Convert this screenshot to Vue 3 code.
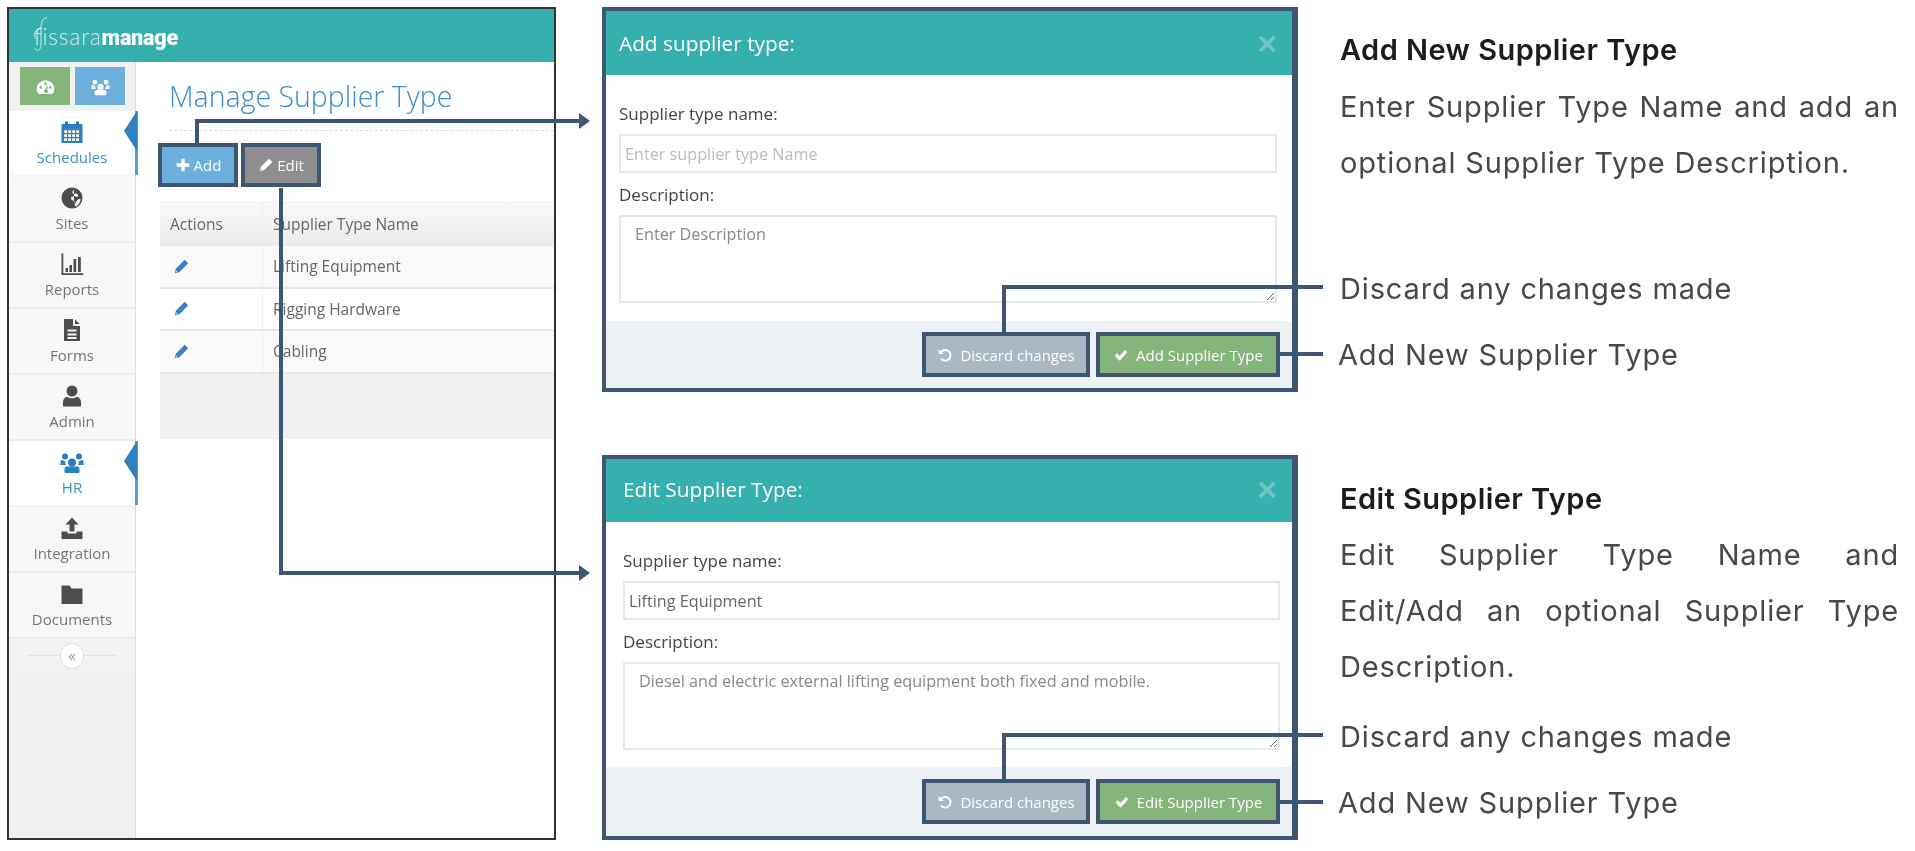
<script setup>
const gridHoles = (() => {
  let s = ''
  for (let r = 0; r < 3; r++) for (let c = 0; c < 4; c++) {
    const x = 4.2 + c * 4, y = 10.2 + r * 4
    s += `M${x} ${y}h2.8v2.8h-2.8z`
  }
  return s
})()

const icons = {
  gauge: 'M12 4a11 11 0 0 0-11 11c0 2.6.9 4.8 2.4 6.5h17.2A10.9 10.9 0 0 0 23 15 11 11 0 0 0 12 4zM6 11.5a1.7 1.7 0 1 1 0 3.4 1.7 1.7 0 0 1 0-3.4zM12 7a1.7 1.7 0 1 1 0 3.4A1.7 1.7 0 0 1 12 7zm6 4.5a1.7 1.7 0 1 1 0 3.4 1.7 1.7 0 0 1 0-3.4zM13.5 11l1.6.7-1.3 4.2a2.4 2.4 0 1 1-1.8-.3z',
  users: 'M12 8.5a4 4 0 1 1 0 8 4 4 0 0 1 0-8zM5 3.5a3 3 0 1 1 0 6 3 3 0 0 1 0-6zm14 0a3 3 0 1 1 0 6 3 3 0 0 1 0-6zM.5 11.5c0-1 1.2-1.5 2-1.5 1 .8 1.7 1 2.7 1-.3 1.8.2 3 1 4H.5zm23 0c0-1-1.2-1.5-2-1.5-1 .8-1.7 1-2.7 1 .3 1.8-.2 3-1 4h5.7zM7 16.5h10c1.5 0 2.5 1 2.5 2.5v2.5c0 1-.8 1.5-1.5 1.5H6c-.7 0-1.5-.5-1.5-1.5V19c0-1.5 1-2.5 2.5-2.5z',
  calendar: 'M1.5 4H5V1.5h3V4h8V1.5h3V4h3.5v19h-21z' + gridHoles,
  globe: 'M12 1.5a10.5 10.5 0 1 0 0 21 10.5 10.5 0 0 0 0-21zM20.5 13c0 3.5-2 6-4.5 7.5l-1.5-1 1-3 3-3.5zM14 4l-2 2 1.5 2 3-.5 2 2-1.5 1.5-3-1-3 1 .5 3 3 1-.5 3.5z',
  chart: 'M1.5 1.5h1.8v19.7h20v1.8H1.5zM5.5 16H8v4H5.5zM9.5 13H12v7H9.5zM13.5 7h2.7v13h-2.7zM18 5h2.8v15H18z',
  file: 'M4 1h9v7h7v15H4zM15 1.3 19.7 6H15zM7.5 11.5v2h9v-2zM7.5 15.5v2h9v-2zM7.5 19v2h9v-2z',
  user: 'M12 1.5a5.5 5.5 0 1 1 0 11 5.5 5.5 0 0 1 0-11zM3 22.5V18c0-3 2-5 4.5-5.3 1.2 1 2.8 1.6 4.5 1.6s3.3-.6 4.5-1.6C19 13 21 15 21 18v4.5z',
  upload: 'M12 1.5l6.5 7h-4v7h-5v-7h-4zM1.5 15.5h6v2h9v-2h6V23h-21z',
  folder: 'M1.5 3.5h8l2 3h11V22h-21z'
}
const pencil = 'M16.5 2.5l5 5L9 20l-6.5 1.5L4 15zM3.8 20.2l2.5-.6-1.900-1.900z'
const plus = 'M9.5 2.5h5v7h7v5h-7v7h-5v-7h-7v-5h7z'
const check = 'M2.5 13L6 9.5l4 4 8-9L21.5 8 10 20.5z'

const navItems = [
  { label: 'Schedules', icon: 'calendar', active: true },
  { label: 'Sites', icon: 'globe' },
  { label: 'Reports', icon: 'chart' },
  { label: 'Forms', icon: 'file' },
  { label: 'Admin', icon: 'user' },
  { label: 'HR', icon: 'users', active: true },
  { label: 'Integration', icon: 'upload' },
  { label: 'Documents', icon: 'folder' }
]
const rows = ['Lifting Equipment', 'Rigging Hardware', 'Cabling']

const modals = [
  {
    key: 'add', cls: 'modal-add', title: 'Add supplier type:', name: '', desc: '', action: 'Add Supplier Type',
    heading: 'Add New Supplier Type',
    fill: ['Enter Supplier Type Name and add an'],
    last: 'optional Supplier Type Description.'
  },
  {
    key: 'edit', cls: 'modal-edit', title: 'Edit Supplier Type:', name: 'Lifting Equipment',
    desc: 'Diesel and electric external lifting equipment both fixed and mobile.', action: 'Edit Supplier Type',
    heading: 'Edit Supplier Type',
    fill: ['Edit Supplier Type Name and', 'Edit/Add an optional Supplier Type'],
    last: 'Description.'
  }
]
</script>

<template>
  <div class="page">
    <section class="app">
      <header class="app-top">
        <span class="logo">
          <svg class="logo-f" viewBox="0 0 20 40" fill="none" stroke="#cfeeed" stroke-width="1"><path d="M9 13C9 6 12 2 15 3M9 13V30C9 36 4 37 3 33" /><path d="M9 13C3 14 1 20 4 24" /></svg>
          <i class="logo-a">fissara</i><b class="logo-b">manage</b>
        </span>
      </header>
      <div class="app-body">
        <nav class="side">
          <div class="quick">
            <span class="quick-btn green"><svg viewBox="0 0 24 24"><path :d="icons.gauge" fill-rule="evenodd" /></svg></span>
            <span class="quick-btn blue"><svg viewBox="0 0 24 24"><path :d="icons.users" /></svg></span>
          </div>
          <a v-for="n in navItems" :key="n.label" class="nav" :class="{ on: n.active }">
            <svg viewBox="0 0 24 24"><path :d="icons[n.icon]" fill-rule="evenodd" /></svg>
            <span>{{ n.label }}</span>
          </a>
          <div class="collapse"><span class="collapse-dot">«</span></div>
        </nav>
        <main class="main">
          <h1 class="title">Manage Supplier Type</h1>
          <div class="toolbar">
            <button class="tb add"><svg viewBox="0 0 24 24"><path :d="plus" /></svg>Add</button>
            <button class="tb edit"><svg viewBox="0 0 24 24"><path :d="pencil" fill-rule="evenodd" /></svg>Edit</button>
          </div>
          <div class="table">
            <div class="tr th"><span class="c1">Actions</span><span class="c2">Supplier Type Name</span></div>
            <div v-for="r in rows" :key="r" class="tr"><span class="c1"><svg viewBox="0 0 24 24"><path :d="pencil" fill-rule="evenodd" /></svg></span><span class="c2">{{ r }}</span></div>
            <div class="tfoot"></div>
          </div>
        </main>
      </div>
    </section>

    <div class="rows">
      <div v-for="m in modals" :key="m.key" class="row" :class="m.cls">
        <section class="modal">
          <header class="m-head"><span>{{ m.title }}</span><b class="m-x">×</b></header>
          <div class="m-body">
            <label class="m-label">Supplier type name:</label>
            <input class="m-input" :value="m.name" placeholder="Enter supplier type Name" readonly />
            <label class="m-label">Description:</label>
            <textarea class="m-area" :value="m.desc" placeholder="Enter Description" readonly></textarea>
          </div>
          <footer class="m-foot">
            <button class="fb discard">
              <svg viewBox="0 0 24 24"><path d="M6 7.5A8 8 0 1 1 6 17.5" fill="none" stroke="#fff" stroke-width="2.8" /><path d="M2.5 3v7.5H10z" fill="#fff" /></svg>Discard changes
            </button>
            <button class="fb confirm"><svg viewBox="0 0 24 24"><path :d="check" fill="#fff" /></svg>{{ m.action }}</button>
          </footer>
        </section>
        <aside class="note">
          <h2 class="note-h">{{ m.heading }}</h2>
          <div v-for="l in m.fill" :key="l" class="note-l fill">{{ l }}</div>
          <div class="note-l">{{ m.last }}</div>
          <div class="note-a">
            <div>Discard any changes made</div>
            <div class="shift">Add New Supplier Type</div>
          </div>
        </aside>
      </div>
    </div>

    <svg class="lines" viewBox="0 0 1915 851" fill="none" stroke="#3f5673" stroke-width="4">
      <path d="M197 146V121H582" />
      <path d="M281 188V573H582" />
      <path d="M579 113l11 8-11 8zM579 565l11 8-11 8z" fill="#3f5673" stroke="none" />
      <path d="M1004 332V287H1323" />
      <path d="M1280 354H1323" />
      <path d="M1004 780V735H1323" />
      <path d="M1280 802H1323" />
    </svg>
  </div>
</template>

<style>
html, body { margin: 0; background: #fff; }
</style>

<style scoped>
.page { position: relative; width: 1915px; height: 851px; padding: 7px 0 0 7px; box-sizing: border-box; display: flex; overflow: hidden; background: #fff; font-family: "Open Sans", sans-serif; }

.app { width: 549px; height: 833px; box-sizing: border-box; border: 2px solid #333; display: flex; flex-direction: column; background: #fff; flex: none; filter: blur(.7px); }
.app-top { height: 53px; background: #36b0ae; display: flex; align-items: center; padding-left: 25px; flex: none; }
.logo { position: relative; color: #fff; font-family: Lato, sans-serif; font-size: 23px; display: flex; align-items: baseline; }
.logo-f { position: absolute; left: -2px; top: -7px; width: 20px; height: 40px; }
.logo-a { font-style: normal; font-weight: 300; letter-spacing: .7px; opacity: .8; }
.logo-b { font-weight: 900; letter-spacing: -.2px; font-family: Roboto, sans-serif; font-size: 21.5px; }
.app-body { flex: 1; display: flex; min-height: 0; }

.side { width: 126px; background: #f1f1f1; border-right: 1px solid #ddd; flex: none; }
.quick { height: 49px; display: flex; gap: 5px; padding: 5px 0 0 11px; box-sizing: border-box; }
.quick-btn { width: 50px; height: 38px; display: flex; align-items: center; justify-content: center; }
.quick-btn svg { width: 19px; height: 19px; fill: #fff; }
.green { background: #86b57c; }
.blue { background: #6eb0dd; }
.nav { position: relative; display: flex; flex-direction: column; align-items: center; height: 66px; box-sizing: border-box; padding-top: 9px; background: #f8f8f8; border-bottom: 2px solid #ececec; color: #757575; font-size: 15px; line-height: 20px; }
.nav svg { width: 24px; height: 24px; fill: #4d4d4d; margin-bottom: 3px; }
.nav.on { background: #fff; color: #3b8ec8; border-bottom-color: #f4f4f4; }
.nav.on svg { fill: #2e7fc0; }
.nav.on::before { content: ""; position: absolute; right: -3px; top: 0; bottom: 0; width: 3px; background: #5aa0d4; }
.nav.on::after { content: ""; position: absolute; right: -2px; top: 0; border-style: solid; border-width: 20px 13px 20px 0; border-color: transparent #2e7fc0 transparent transparent; }
.collapse { height: 34px; display: flex; align-items: center; justify-content: center; background: linear-gradient(#e2e2e2, #e2e2e2) center / 88px 1px no-repeat, #f3f3f3; border-bottom: 1px solid #ededed; box-sizing: border-box; }
.collapse-dot { width: 24px; height: 26px; border-radius: 50%; background: #fff; border: 1px solid #ddd; box-sizing: border-box; color: #999; font-size: 15px; line-height: 22px; text-align: center; }

.main { flex: 1; min-width: 0; padding-top: 15px; }
.title { margin: 0 0 0 33px; font-size: 28.5px; font-weight: 300; color: #3b8ec8; line-height: 38px; height: 54px; box-sizing: border-box; border-bottom: 1px dashed #ddd; }
.toolbar { display: flex; gap: 3px; margin: 12px 0 15px 22px; }
.tb { height: 44px; width: 80px; box-sizing: border-box; border: 4px solid #3f5673; color: #fff; font: 15px "Open Sans", sans-serif; display: flex; align-items: center; justify-content: center; gap: 3px; padding: 0; }
.tb svg { width: 16px; height: 16px; fill: #fff; }
.add { background: #6eb0dd; }
.edit { background: #8e8e8e; }
.table { margin-left: 24px; color: #666; font-size: 15.5px; }
.tr { height: 42.5px; display: flex; align-items: center; background: #fff; border-bottom: 2px solid #e8e8e8; box-sizing: border-box; }
.tr:nth-child(even) { background: #fafafa; }
.th { height: 44px; background: linear-gradient(#f9f9f9, #ececec) !important; border-top: 1px solid #eee; }
.c1 { width: 103px; height: 100%; box-sizing: border-box; padding-left: 10px; display: flex; align-items: center; border-right: 1px solid #eee; flex: none; }
.c1 svg { width: 17px; height: 17px; fill: #3c80bf; margin-left: 3px; }
.c2 { padding-left: 10px; }
.tfoot { height: 65px; background: #f0f0f0; }

.rows { margin-left: 46px; display: flex; flex-direction: column; gap: 63px; flex: none; }
.row { display: flex; height: 385px; }
.modal { width: 696px; height: 100%; box-sizing: border-box; border: 4px solid #3f5673; border-right-width: 6px; display: flex; flex-direction: column; background: #fff; flex: none; filter: blur(.7px); }
.m-head { height: 64px; flex: none; background: #36b0ae; color: #fff; font-size: 20.8px; display: flex; align-items: center; justify-content: space-between; padding: 0 15px 0 13px; box-sizing: border-box; }
.modal-edit .m-head { height: 63px; padding-left: 17px; padding-bottom: 3px; }
.m-x { color: #6fc6c3; font: bold 34px "Liberation Sans", sans-serif; }
.m-body { flex: 1; padding: 27px 15px 0 13px; display: flex; flex-direction: column; }
.modal-edit .m-body { padding-left: 17px; padding-right: 12px; }
.m-label { color: #444; font-size: 17px; line-height: 24px; margin-bottom: 8px; }
.m-input { height: 39px; box-sizing: border-box; border: 2px solid #e8e8e8; margin-bottom: 10px; padding: 0 4px; font: 16.2px "Open Sans", sans-serif; color: #666; outline: 0; }
.m-area { height: 88px; box-sizing: border-box; border: 2px solid #e8e8e8; padding: 6px 14px; font: 16.2px "Open Sans", sans-serif; color: #888; outline: 0; }
.m-input::placeholder { color: #bbb; }
.m-area::placeholder { color: #888; }
.m-foot { height: 67px; flex: none; background: #eef1f6; display: flex; justify-content: flex-end; gap: 6px; padding: 11px 12px 0 0; box-sizing: border-box; }
.modal-edit .m-foot { height: 69px; padding-top: 12px; }
.fb { height: 45px; box-sizing: border-box; border: 4px solid #3f5673; color: #fff; font: 15px "Open Sans", sans-serif; display: flex; align-items: center; justify-content: center; gap: 7px; padding: 0; }
.fb svg { width: 16px; height: 16px; }
.discard { width: 168px; background: #a9b8c2; }
.confirm { width: 184px; background: #86b57c; }

.note { width: 559px; margin-left: 42px; padding: 15px 0 4px; box-sizing: border-box; display: flex; flex-direction: column; font-family: Inter, sans-serif; font-size: 29px; line-height: 56px; color: #484848; letter-spacing: .85px; flex: none; filter: blur(.45px); }
.modal-edit .note { padding-top: 16px; }
.note-h { margin: 0; font-size: 29px; font-weight: 600; line-height: 56px; color: #1c1c1c; letter-spacing: .45px; }
.modal-add .note-l { position: relative; top: 1px; }
.note-l { white-space: nowrap; }
.fill { text-align: justify; text-align-last: justify; white-space: normal; }
.note-a { margin-top: auto; line-height: 66px; white-space: nowrap; }
.shift { margin-left: -2px; }

.lines { position: absolute; left: 0; top: 0; width: 1915px; height: 851px; pointer-events: none; filter: blur(.4px); }
</style>
